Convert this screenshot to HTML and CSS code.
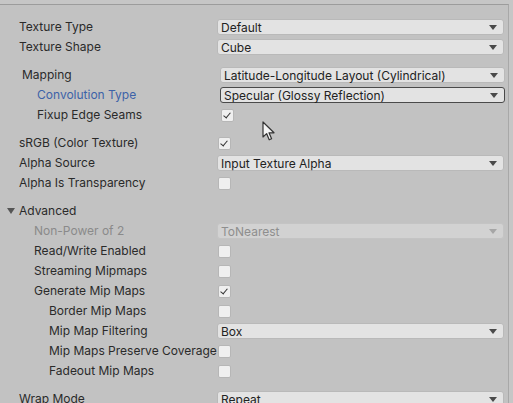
FILE: index.html
```html
<!DOCTYPE html>
<html>
<head>
<meta charset="utf-8">
<link rel="stylesheet" href="styles.css">
</head>
<body>
<div class="panel">
  <div class="group">
    <div class="row"><span class="label">Texture Type</span><div class="dropdown"><span>Default</span><i class="arrow"></i></div></div>
    <div class="row"><span class="label">Texture Shape</span><div class="dropdown"><span>Cube</span><i class="arrow"></i></div></div>
  </div>
  <div class="group sub">
    <div class="row"><span class="label">Mapping</span><div class="dropdown"><span>Latitude-Longitude Layout (Cylindrical)</span><i class="arrow"></i></div></div>
    <div class="row"><span class="label indent1 blue">Convolution Type</span><div class="dropdown focused"><span>Specular (Glossy Reflection)</span><i class="arrow"></i></div></div>
    <div class="row"><span class="label indent1">Fixup Edge Seams</span><div class="field"><span class="checkbox checked"></span></div></div>
  </div>
  <div class="group">
    <div class="row"><span class="label">sRGB (Color Texture)</span><div class="field"><span class="checkbox checked"></span></div></div>
    <div class="row"><span class="label">Alpha Source</span><div class="dropdown"><span>Input Texture Alpha</span><i class="arrow"></i></div></div>
    <div class="row"><span class="label">Alpha Is Transparency</span><div class="field"><span class="checkbox"></span></div></div>
  </div>
  <div class="group">
    <div class="row"><span class="label foldout"><i class="fold-arrow"></i>Advanced</span></div>
    <div class="row"><span class="label indent1 disabled">Non-Power of 2</span><div class="dropdown disabled"><span>ToNearest</span><i class="arrow"></i></div></div>
    <div class="row"><span class="label indent1">Read/Write Enabled</span><div class="field"><span class="checkbox"></span></div></div>
    <div class="row"><span class="label indent1">Streaming Mipmaps</span><div class="field"><span class="checkbox"></span></div></div>
    <div class="row"><span class="label indent1">Generate Mip Maps</span><div class="field"><span class="checkbox checked"></span></div></div>
    <div class="row"><span class="label indent2">Border Mip Maps</span><div class="field"><span class="checkbox"></span></div></div>
    <div class="row"><span class="label indent2">Mip Map Filtering</span><div class="dropdown"><span>Box</span><i class="arrow"></i></div></div>
    <div class="row"><span class="label indent2">Mip Maps Preserve Coverage</span><div class="field"><span class="checkbox"></span></div></div>
    <div class="row"><span class="label indent2">Fadeout Mip Maps</span><div class="field"><span class="checkbox"></span></div></div>
  </div>
  <div class="group">
    <div class="row"><span class="label">Wrap Mode</span><div class="dropdown"><span>Repeat</span><i class="arrow"></i></div></div>
  </div>
  <svg class="cursor" width="14" height="21" viewBox="0 0 14 21">
    <path d="M1 1 L1 16 L4.6 12.6 L7.2 18.8 L9.6 17.8 L7 11.8 L12 11.8 Z" fill="#f4f4f4" stroke="#333" stroke-width="1.2" stroke-linejoin="round"/>
  </svg>
</div>
</body>
</html>
```
FILE: styles.css
```css
html, body {
  margin: 0;
  padding: 0;
}
body {
  width: 513px;
  height: 403px;
  overflow: hidden;
  background: #c6c6c6;
  font-family: Inter, "Noto Sans", "Liberation Sans", sans-serif;
  font-size: 12px;
  color: #2a2a2a;
}
.panel {
  position: relative;
  box-sizing: border-box;
  width: 509px;
  height: 399px;
  overflow: hidden;
  margin-top: 4px;
  background: #c2c2c2;
  border-top: 1px solid #9c9c9c;
  border-right: 1px solid #a8a8a8;
  padding: 12px 4px 0 0;
  display: flex;
  flex-direction: column;
  gap: 8px;
}
.group {
  display: flex;
  flex-direction: column;
  flex-shrink: 0;
}
.group.sub {
  margin: 0 -1px 0 3px;
}
.row {
  height: 20px;
  display: grid;
  grid-template-columns: 217px 1fr;
  align-items: center;
}
.label {
  padding-left: 19px;
  white-space: nowrap;
  line-height: 20px;
}
.indent1 { padding-left: 34px; }
.indent2 { padding-left: 49px; }
.blue { color: #3d62a8; }
.label.disabled { color: #8a8a8a; }
.foldout {
  padding-left: 7px;
  display: flex;
  align-items: center;
}
.fold-arrow {
  width: 0;
  height: 0;
  border-left: 4px solid transparent;
  border-right: 4px solid transparent;
  border-top: 6px solid #555;
  margin-right: 4px;
}
.dropdown {
  box-sizing: border-box;
  height: 16px;
  background: #e3e3e3;
  border: 1px solid #b9b9b9;
  border-radius: 3px;
  display: flex;
  align-items: center;
  justify-content: space-between;
  padding: 0 6px 0 3px;
  color: #222;
  white-space: nowrap;
}
.dropdown.focused {
  border-color: #4a4a4a;
}
.dropdown.disabled {
  background: #d2d2d2;
  border-color: #c4c4c4;
  color: #8e8e8e;
}
.arrow {
  width: 0;
  height: 0;
  border-left: 4px solid transparent;
  border-right: 4px solid transparent;
  border-top: 5px solid #4a4a4a;
}
.dropdown.disabled .arrow {
  border-top-color: #a6a6a6;
}
.field {
  display: flex;
  align-items: center;
}
.checkbox {
  box-sizing: border-box;
  width: 13px;
  height: 13px;
  background: #efefef;
  border: 1px solid #b6b6b6;
  border-radius: 2px;
  position: relative;
  margin-left: 1px;
}
.checkbox.checked::after {
  content: "";
  position: absolute;
  left: 3px;
  top: 1px;
  width: 3px;
  height: 6px;
  border-right: 1.6px solid #333;
  border-bottom: 1.6px solid #333;
  transform: rotate(40deg);
}
.cursor {
  position: absolute;
  left: 262px;
  top: 116px;
}
```
